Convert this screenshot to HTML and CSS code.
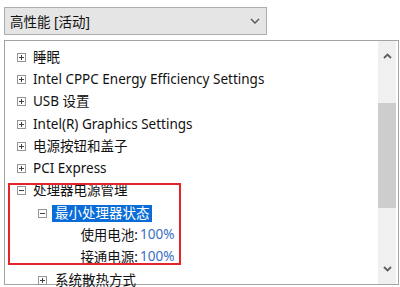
FILE: index.html
```html
<!DOCTYPE html>
<html lang="zh-CN">
<head>
  <meta charset="UTF-8">
  <title>电源选项 - 高级设置</title>
  <link rel="stylesheet" href="styles.css">
</head>
<body>
  <div class="plan-select">
    <span class="plan-name">高性能 [活动]</span>
    <svg class="chevron" width="10" height="6" viewBox="0 0 10 6">
      <path d="M1 1 L5 5 L9 1" fill="none" stroke="#555" stroke-width="1.4"/>
    </svg>
  </div>

  <div class="tree-box">
    <ul class="tree">
      <li class="row lvl1"><span class="exp plus"></span><span class="label">睡眠</span></li>
      <li class="row lvl1"><span class="exp plus"></span><span class="label">Intel CPPC Energy Efficiency Settings</span></li>
      <li class="row lvl1"><span class="exp plus"></span><span class="label">USB 设置</span></li>
      <li class="row lvl1"><span class="exp plus"></span><span class="label">Intel(R) Graphics Settings</span></li>
      <li class="row lvl1"><span class="exp plus"></span><span class="label">电源按钮和盖子</span></li>
      <li class="row lvl1"><span class="exp plus"></span><span class="label">PCI Express</span></li>
      <li class="row lvl1"><span class="exp minus"></span><span class="label">处理器电源管理</span></li>
      <li class="row lvl2"><span class="exp minus"></span><span class="label selected">最小处理器状态</span></li>
      <li class="row lvl3"><span class="key">使用电池:</span><span class="value">100%</span></li>
      <li class="row lvl3"><span class="key">接通电源:</span><span class="value">100%</span></li>
      <li class="row lvl2"><span class="exp plus"></span><span class="label">系统散热方式</span></li>
    </ul>

    <div class="scrollbar">
      <svg class="arrow" width="9" height="6" viewBox="0 0 9 6">
        <path d="M1 5 L4.5 1.5 L8 5" fill="none" stroke="#606060" stroke-width="1.8"/>
      </svg>
      <div class="track">
        <div class="thumb"></div>
      </div>
      <svg class="arrow" width="9" height="6" viewBox="0 0 9 6">
        <path d="M1 1 L4.5 4.5 L8 1" fill="none" stroke="#606060" stroke-width="1.8"/>
      </svg>
    </div>

    <div class="callout"></div>
  </div>
</body>
</html>
```

FILE: styles.css
```css
body {
  margin: 0;
  width: 400px;
  height: 287px;
  overflow: hidden;
  background-color: #fff;
  font-family: "Noto Sans", "Noto Sans CJK SC", sans-serif;
  font-size: 13.5px;
  color: #111;
}
.plan-select {
  display: flex;
  align-items: center;
  justify-content: space-between;
  box-sizing: border-box;
  width: 263px;
  height: 28px;
  margin: 7px 0 0 4px;
  padding: 0 6px 0 5px;
  background-color: #e5e5e5;
  border: 1px solid #adadad;
}
.plan-name {
  font-size: 13.5px;
}
.tree-box {
  position: relative;
  display: flex;
  box-sizing: border-box;
  width: 395px;
  height: 245px;
  margin: 5px 0 0 4px;
  border: 1px solid #a3a3a3;
}
.tree {
  flex: 1;
  list-style: none;
  margin: 0;
  padding: 5px 0 0 0;
}
.row {
  display: flex;
  align-items: center;
  height: 22.3px;
  white-space: nowrap;
}
.lvl1 {
  padding-left: 12px;
}
.lvl2 {
  padding-left: 33px;
}
.lvl1 .exp {
  margin-right: 7px;
}
.lvl2 .exp {
  margin-right: 8px;
}
.exp {
  position: relative;
  box-sizing: border-box;
  width: 9px;
  height: 9px;
  border: 1px solid #959595;
  flex-shrink: 0;
}
.exp::before {
  content: "";
  position: absolute;
  left: 1px;
  top: 3px;
  width: 5px;
  height: 1px;
  background-color: #404040;
}
.plus::after {
  content: "";
  position: absolute;
  left: 3px;
  top: 1px;
  width: 1px;
  height: 5px;
  background-color: #404040;
}
.label {
  line-height: 17px;
}
.selected {
  margin-left: -3px;
  padding: 0 2px 0 3px;
  background-color: #0a6cd8;
  color: #fff;
}
.lvl3 {
  box-sizing: border-box;
  padding-bottom: 3px;
}
.key {
  width: 133px;
  text-align: right;
}
.value {
  margin-left: 2px;
  color: #3a6fc4;
}
.scrollbar {
  display: flex;
  flex-direction: column;
  align-items: center;
  width: 18px;
  margin-right: 2px;
  background-color: #f0f0f0;
}
.arrow {
  margin: 12px 0;
}
.track {
  flex: 1;
  width: 100%;
}
.thumb {
  width: 100%;
  height: 105px;
  margin-top: 32px;
  background-color: #cdcdcd;
}
.callout {
  position: absolute;
  left: 3px;
  top: 142px;
  width: 169px;
  height: 78px;
  border: 2.5px solid #e3242b;
}
```
